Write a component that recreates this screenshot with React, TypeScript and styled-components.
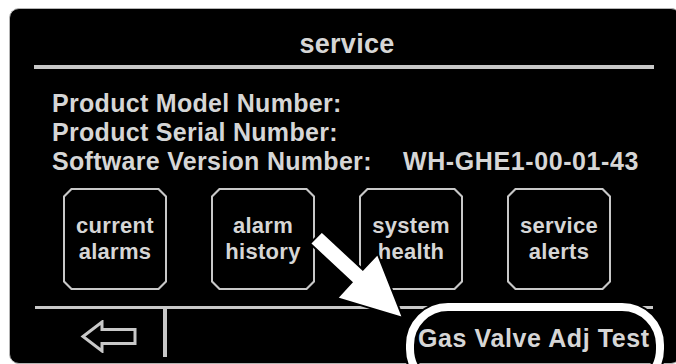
import styled, { createGlobalStyle } from "styled-components";

const GlobalStyle = createGlobalStyle`
  html, body {
    margin: 0;
    padding: 0;
    background: #ffffff;
    overflow: hidden;
  }
  body {
    font-family: "Liberation Sans", Arial, Helvetica, sans-serif;
  }
`;

const TEXT = "#d6d6d6";
const LINE = "#c8c8c8";

const Screen = styled.div`
  position: relative;
  box-sizing: border-box;
  margin: 8px 0 0 9px;
  width: 672px;
  height: 356px;
  background: #000;
  border: 1px solid #b4b4b4;
  border-radius: 10px;
  display: flex;
  flex-direction: column;
  color: ${TEXT};
  font-weight: 700;
  letter-spacing: 0.3px;
`;

const Title = styled.div`
  margin-top: 20px;
  padding-left: 4px;
  font-size: 27px;
  line-height: 30px;
  text-align: center;
`;

const Rule = styled.div<{ $thick: number; $left: number; $right: number; $top: number }>`
  height: ${(p) => p.$thick}px;
  margin: ${(p) => p.$top}px ${(p) => p.$right}px 0 ${(p) => p.$left}px;
  background: ${LINE};
`;

const Info = styled.div`
  margin-top: 20px;
  padding-left: 42px;
  font-size: 25px;
  line-height: 29px;
`;

const InfoRow = styled.div`
  display: flex;
`;

const InfoLabel = styled.span`
  width: 351px;
  white-space: nowrap;
`;

const InfoValue = styled.span`
  letter-spacing: 0.6px;
`;

const ButtonRow = styled.div`
  display: flex;
  gap: 44px;
  margin: 12px 0 0 53px;
`;

const octagon = (c: number) =>
  `polygon(${c}px 0, calc(100% - ${c}px) 0, 100% ${c}px, 100% calc(100% - ${c}px), calc(100% - ${c}px) 100%, ${c}px 100%, 0 calc(100% - ${c}px), 0 ${c}px)`;

const MenuButton = styled.div`
  box-sizing: border-box;
  width: 104px;
  height: 102px;
  padding: 2px;
  background: ${LINE};
  clip-path: ${octagon(8)};
`;

const MenuFace = styled.div`
  height: 100%;
  background: #000;
  clip-path: ${octagon(7)};
  display: flex;
  align-items: center;
  justify-content: center;
  text-align: center;
  font-size: 22px;
  line-height: 26px;
`;

const Footer = styled.div`
  display: flex;
  align-items: flex-start;
  margin-left: 25px;
`;

const BackArea = styled.div`
  width: 128px;
  height: 48px;
  padding: 11px 0 0 45px;
  box-sizing: border-box;
`;

const Divider = styled.div`
  width: 4px;
  height: 48px;
  background: ${LINE};
`;

const FooterLabel = styled.div`
  margin: 14px 0 0 251px;
  font-size: 25px;
  line-height: 30px;
  letter-spacing: 0.6px;
  white-space: nowrap;
`;

const Overlay = styled.svg`
  position: absolute;
  left: 0;
  top: 0;
  width: 676px;
  height: 364px;
  pointer-events: none;
`;

const buttons = [
  ["current", "alarms"],
  ["alarm", "history"],
  ["system", "health"],
  ["service", "alerts"],
];

export default function App() {
  return (
    <>
      <GlobalStyle />
      <Screen>
        <Title>service</Title>
        <Rule $thick={4} $left={24} $right={26} $top={6} />
        <Info>
          <InfoRow>
            <InfoLabel>Product Model Number:</InfoLabel>
          </InfoRow>
          <InfoRow>
            <InfoLabel>Product Serial Number:</InfoLabel>
          </InfoRow>
          <InfoRow>
            <InfoLabel>Software Version Number:</InfoLabel>
            <InfoValue>WH-GHE1-00-01-43</InfoValue>
          </InfoRow>
        </Info>
        <ButtonRow>
          {buttons.map(([a, b]) => (
            <MenuButton key={a + b}>
              <MenuFace>
                {a}
                <br />
                {b}
              </MenuFace>
            </MenuButton>
          ))}
        </ButtonRow>
        <Rule $thick={3} $left={25} $right={27} $top={16} />
        <Footer>
          <BackArea>
            <svg width="58" height="33" viewBox="0 0 58 33">
              <path
                d="M3 16.5 L22 2 L22 9.5 L55 9.5 L55 23.5 L22 23.5 L22 31 Z"
                fill="none"
                stroke={LINE}
                strokeWidth="3"
                strokeLinejoin="miter"
              />
            </svg>
          </BackArea>
          <Divider />
          <FooterLabel>Gas Valve Adj Test</FooterLabel>
        </Footer>
      </Screen>
      <Overlay viewBox="0 0 676 364">
        <rect
          x="410"
          y="307"
          width="250"
          height="80"
          rx="38"
          fill="none"
          stroke="#000"
          strokeWidth="12"
        />
        <rect
          x="410"
          y="307"
          width="250"
          height="80"
          rx="38"
          fill="none"
          stroke="#fff"
          strokeWidth="8"
        />
        <polygon
          points="310,243.5 321.8,231.6 362.8,269.6 377.7,253.9 403,318 337.1,298.1 351.6,282.4"
          fill="#fff"
          stroke="#000"
          strokeWidth="2"
          strokeLinejoin="miter"
        />
      </Overlay>
    </>
  );
}
